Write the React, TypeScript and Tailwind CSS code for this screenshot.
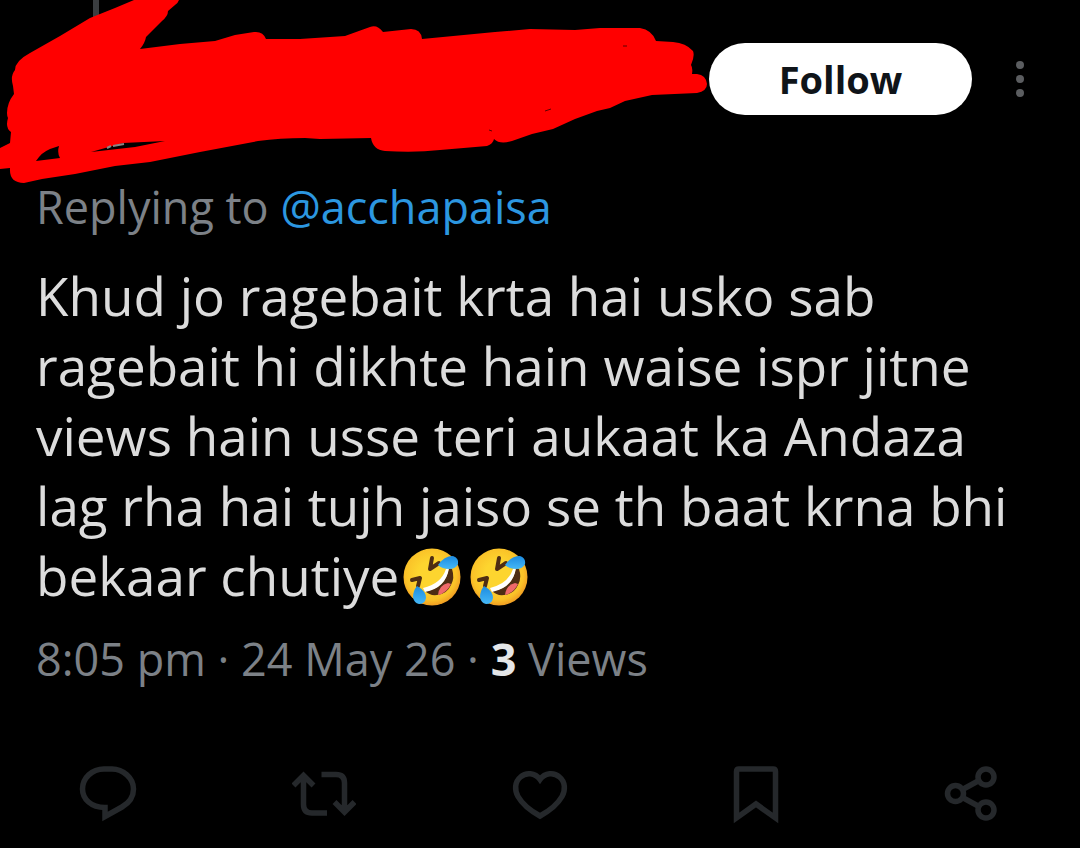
import type { ReactNode } from "react";

function Scribble() {
    return (
        <svg
            className="absolute left-0 top-0 pointer-events-none"
            width="710"
            height="184"
            viewBox="0 0 710 184"
            aria-hidden="true"
        >
            <rect x="93" y="0" width="6" height="20" fill="#3a3d40" />
            <path
                fill="#ff0000"
                fillRule="evenodd"
                d="M134 0 L115 8 L90 18 L60 36 L30 53 Q15 61 15 70 Q10 76 13 86 L14 94 Q7 103 7 113 Q7 116 8 118 Q5 128 11 132 L10 143 L0 148 V169 L10 168 Q9 183 24 183 L42 179 L75 174 L115 166 L150 162 L200 152 L258 141 Q280 138 305 138 L320 139 L371 138 Q373 150 385 151 Q415 153 440 150 L487 146 Q493 144 494 139 Q500 145 512 141 L532 134 L553 129 L575 119 L597 111 L610 108 L625 101 L652 95 L697 93 Q707 91 707 84 Q706 75 697 74 L692 74 Q693 68 691 65 Q695 56 693 51 Q686 43 673 42 L656 41 Q652 30 640 28 L600 28 L575 30 L530 29 L495 32 L422 39 Q421 29 411 29 L383 32 Q377 24 370 27 L345 36 L300 39 L266 39 Q263 31 254 32 L235 35 L215 41 L180 44 L140 49 Q145 43 146 37 L162 21 Q168 16 168 11 L175 5 Q178 3 179 0 Z M36 161 Q42 152 50 149 L59 146 Q57 153 60 158 Z M91 152 L123 143 L165 141 L135 147 Z"
            />
            <path d="M107 148 l4 -2 M113 146 l11 -2" stroke="#8d8585" strokeWidth="2" fill="none" />
            <path d="M545 111 l6 -2 M489 130 l3 1 M623 46 l4 0" stroke="#5c0000" strokeWidth="1" fill="none" />
        </svg>
    );
}

function RollingLaugh() {
    return (
        <svg
            className="inline-block w-[67px] h-[60px] align-[-11px]"
            viewBox="0 0 67 60"
            role="img"
            aria-label="Rolling on the floor laughing"
        >
            <defs>
                <radialGradient id="face" cx="48%" cy="45%" r="56%">
                    <stop offset="0.4" stopColor="#fdd52f" />
                    <stop offset="0.8" stopColor="#fac228" />
                    <stop offset="1" stopColor="#f09a22" />
                </radialGradient>
                <linearGradient id="tear" x1="0" y1="0" x2="0" y2="1">
                    <stop offset="0" stopColor="#1c8be0" />
                    <stop offset="1" stopColor="#45b8f7" />
                </linearGradient>
            </defs>
            <circle cx="33" cy="30" r="28.5" fill="url(#face)" />
            <path d="M26 44 Q46 42 50 21 L53 22 Q56 31 52 38 Q48 47 38 48 Q31 49 26 44 Z" fill="#4e2d13" />
            <path d="M39 48 Q40 38 49 36 L52 37 Q48 46 39 48 Z" fill="#f06a6a" />
            <path d="M24 41 Q42 37 47 22 L50 21 Q47 41 26 45 Z" fill="#ffffff" />
            <path d="M33 11 L31 22 L40 16" fill="none" stroke="#4e2d13" strokeWidth="4" strokeLinecap="round" strokeLinejoin="round" />
            <path d="M13 33 L21 31 L19 39" fill="none" stroke="#4e2d13" strokeWidth="4" strokeLinecap="round" strokeLinejoin="round" />
            <path d="M39 18 Q45 9 54 9 Q60 11 59 17 Q57 22 50 22 Q43 22 39 18 Z" fill="url(#tear)" />
            <path d="M18 39 Q27 44 27 51 Q26 57 20 57 Q15 56 14 50 Q14 44 18 39 Z" fill="url(#tear)" />
        </svg>
    );
}

function Action({ label, children }: { label: string; children: ReactNode }) {
    return (
        <button type="button" aria-label={label} className="flex items-center justify-center">
            <svg
                className="w-16 h-16"
                viewBox="0 0 64 64"
                fill="none"
                stroke="#25282b"
                strokeWidth="5.5"
                aria-hidden="true"
            >
                {children}
            </svg>
        </button>
    );
}

export default function App() {
    return (
        <main className="min-h-screen bg-black font-['Open_Sans',sans-serif] text-[45px] leading-14 text-[#7c8187]">
            <header className="relative flex items-center justify-end gap-4 pt-[43px] pr-7">
                <Scribble />
                <button
                    type="button"
                    className="h-[72px] w-[263px] rounded-full bg-white text-[38px] font-bold text-[#0f1419]"
                >
                    Follow
                </button>
                <button type="button" aria-label="More options" className="flex h-[72px] w-16 items-center justify-center">
                    <svg className="w-10 h-10" viewBox="0 0 40 40" fill="#5b5d60" aria-hidden="true">
                        <circle cx="20" cy="6" r="4" />
                        <circle cx="20" cy="20" r="4" />
                        <circle cx="20" cy="34" r="4" />
                    </svg>
                </button>
            </header>

            <article className="px-9 pt-16">
                <p>
                    Replying to{" "}
                    <a href="#" className="text-[#2c97e0]">
                        @acchapaisa
                    </a>
                </p>
                <p className="mt-[26px] text-[53px] leading-[70px] text-[#dcdcdc]">
                    Khud jo ragebait krta hai usko sab
                    <br />
                    ragebait hi dikhte hain waise ispr jitne
                    <br />
                    views hain usse teri aukaat ka Andaza
                    <br />
                    lag rha hai tujh jaiso se th baat krna bhi
                    <br />
                    bekaar chutiye
                    <RollingLaugh />
                    <RollingLaugh />
                </p>
                <p className="mt-5">
                    8:05 pm · 24 May 26 · <strong className="font-bold text-[#e4e6e8]">3</strong> Views
                </p>
            </article>

            <div className="mt-[75px] grid grid-cols-5">
                <Action label="Reply">
                    <path d="M28 7 H36 C47 7 57.5 16 57.5 27 C57.5 36 53 41 46 45 L29 54.500 V45.500 C15 45.500 6.500 37 6.500 27 C6.500 16 16 7 28 7 Z" />
                </Action>
                <Action label="Repost">
                    <path d="M1.500 23.500 L11.500 13.500 L21.500 23.500 M11.500 14 V42.500 Q11.500 51 20 51 H35 M29.500 12.500 H44 Q52.500 12.500 52.500 21 V49 M42.500 40 L52.500 50 L62.500 40" />
                </Action>
                <Action label="Like">
                    <path d="M32 17.500 C27 10.500 18 10 12.500 15 C6.500 20 6.500 28 10 34.500 C14.500 42.500 23 49 32 54 C41 49 49.500 42.500 54 34.500 C57.500 28 57.500 20 51.500 15 C46 10 37 10.500 32 17.500 Z" />
                </Action>
                <Action label="Bookmark">
                    <path d="M15 7 H49 Q51.500 7 51.500 9.500 V56 L32 42 L12.500 56 V9.500 Q12.500 7 15 7 Z" />
                </Action>
                <Action label="Share">
                    <circle cx="15.500" cy="31.500" r="8" />
                    <circle cx="46" cy="15" r="8" />
                    <circle cx="46" cy="48" r="8" />
                    <path d="M22.500 27.500 L39 18.500 M22.500 35.500 L39 44.500" />
                </Action>
            </div>
        </main>
    );
}
